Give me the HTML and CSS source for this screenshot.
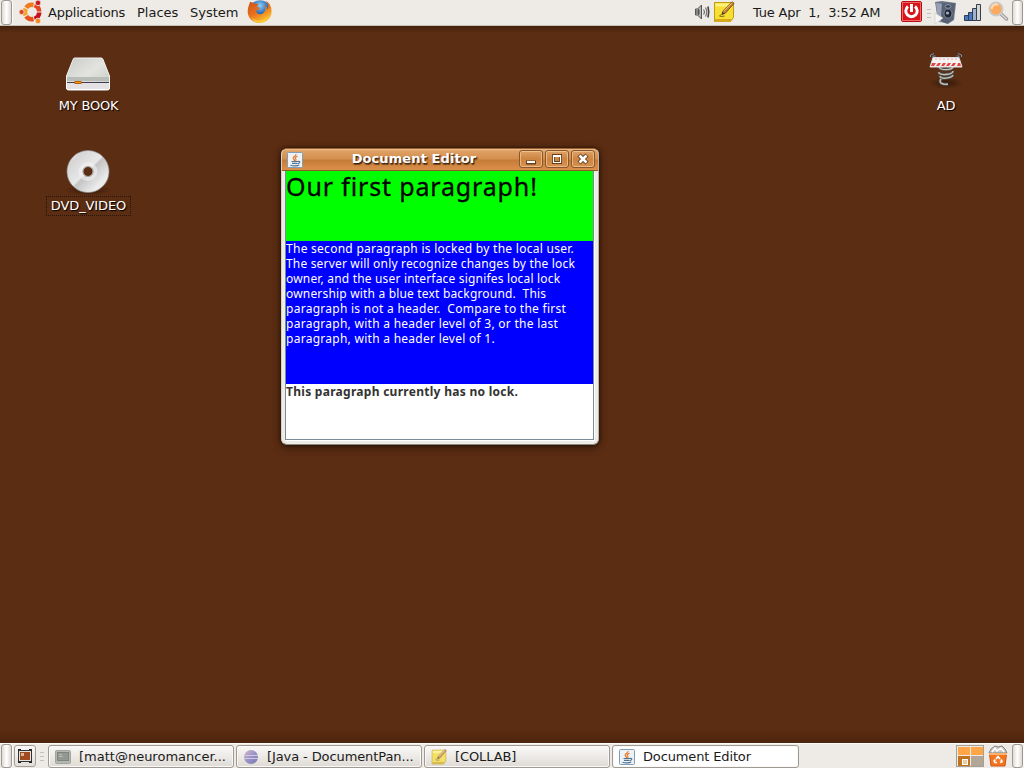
FILE: index.html
```html
<!DOCTYPE html>
<html lang="en">
<head>
<meta charset="utf-8">
<title>Desktop</title>
<link rel="stylesheet" href="styles.css">
</head>
<body>
<svg class="defs" width="0" height="0" aria-hidden="true">
  <defs>
    <linearGradient id="drive" x1="0" y1="0" x2="1" y2="1"><stop offset="0" stop-color="#c9cbc6"/><stop offset=".5" stop-color="#e3e4e0"/><stop offset="1" stop-color="#c4c6c1"/></linearGradient>
    <linearGradient id="disc" x1="0" y1="0" x2="1" y2="1"><stop offset="0" stop-color="#fff"/><stop offset=".2" stop-color="#d6d6d6"/><stop offset=".48" stop-color="#e8e8e8"/><stop offset=".52" stop-color="#c4c4c4"/><stop offset=".8" stop-color="#ededed"/><stop offset="1" stop-color="#c8c8c8"/></linearGradient>
    <radialGradient id="shade"><stop offset="0" stop-color="#000" stop-opacity=".45"/><stop offset="1" stop-color="#000" stop-opacity="0"/></radialGradient>
    <radialGradient id="globe" cx=".5" cy=".25" r=".7"><stop offset="0" stop-color="#8fd0f4"/><stop offset=".5" stop-color="#2c6fbd"/><stop offset="1" stop-color="#173a80"/></radialGradient>
    <linearGradient id="fox" x1="0" y1="0" x2=".6" y2="1"><stop offset="0" stop-color="#c9501a"/><stop offset=".55" stop-color="#e8701c"/><stop offset="1" stop-color="#fbc52e"/></linearGradient>
    <linearGradient id="eclipse" x1="0" y1="0" x2="1" y2="1"><stop offset="0" stop-color="#d9b6c9"/><stop offset=".5" stop-color="#9a94c6"/><stop offset="1" stop-color="#7775ae"/></linearGradient>
    <symbol id="java" viewBox="0 0 16 16">
      <rect x=".5" y=".5" width="15" height="15" rx="1" fill="#eef2f5" stroke="#7f9db5"/>
      <path d="M9 2C9.500 4 6 4.400 6.200 6.300c.1 1.200 1.500 1.400 1.300 2.700M10.600 4.300C8 5.400 7.500 6 8.700 7.200c.6.700.3 1.300-.3 1.800" fill="none" stroke="#e5772b" stroke-width="1.200"/>
      <path d="M4.500 9.500h6.300M5 11.300h5.200M10.800 9.500c3-.6 2.500 1.900-.3 2.200M3.500 13.300c2 .9 7 .8 8.700-.2" fill="none" stroke="#4f7594" stroke-width="1.200"/>
    </symbol>
    <symbol id="note" viewBox="0 0 22 22">
      <path d="M1.500 1.500h19v15l-3 4h-16z" fill="#f7de32" stroke="#bd9c14"/>
      <path d="M2.500 2.500h17v3h-17z" fill="#fff17e"/>
      <path d="M2 18h17l-2 3H2z" fill="#d6a91b"/>
      <path d="M8.500 13.500c-3 1.500-3 2.500 3 1.600" fill="none" stroke="#77651c"/>
      <path d="M9 13.500l1-3.500L19 .8l2 1.700-8.800 9.800z" fill="#c7822f" stroke="#76501e"/>
      <path d="M10.500 10.300l8.700-8.700" stroke="#f5cf82"/>
      <path d="M9 13.500l.7-2.500 1.600 1.500z" fill="#333"/>
    </symbol>
  </defs>
</svg>

<div class="desktop">
  <header class="panel panel-top">
    <span class="handle"></span>
    <svg class="ubuntu" width="24" height="24" viewBox="0 0 24 24">
      <g fill="none" stroke-width="4.600">
        <path d="M7.200 7.800A7 7 0 0 1 14.500 5" stroke="#f07a1c"/>
        <path d="M15.500 5.200A7 7 0 0 1 20.200 11.500" stroke="#e8451f"/>
        <path d="M20.200 12.500A7 7 0 0 1 15.500 18.800" stroke="#c8101c"/>
        <path d="M14.500 19A7 7 0 0 1 7.200 16.200" stroke="#e8501c"/>
        <path d="M6.700 15.200A7 7 0 0 1 6.700 8.800" stroke="#f7a01f"/>
      </g>
      <g stroke="#eeeae5" stroke-width=".8"><circle cx="2.600" cy="12" r="2.600" fill="#e3421d"/><circle cx="19" cy="2.900" r="2.800" fill="#c91a20"/><circle cx="19" cy="21" r="2.800" fill="#f58a20"/></g>
    </svg>
    <nav class="menus"><span class="m-app">Applications</span><span class="m-pla">Places</span><span class="m-sys">System</span></nav>
    <svg class="firefox" width="25" height="24" viewBox="0 0 25 24">
      <circle cx="13" cy="11" r="10.800" fill="url(#globe)"/>
      <path d="M3 2c2-.4 3 .5 4 1.700 2-.5 3 0 4.300.8L9.600 6.800l3 1-.5 1.800-3 .9c.3 4 4.600 5 7.500 2.200 2-2 2.500-5 .8-7.700 2 .9 3 2.700 3.200 4.500C22 7 20.800 3 18.300.8 23 2.500 25 8 24.500 12.500 24 19 18 23 12.500 23 6 23 .7 18 .7 11.500.7 7.500 2 5 3 2z" fill="url(#fox)"/>
      <path d="M3 15c3 6 12 8 18 1-2 6-10 8-14 5" fill="#ffd447" opacity=".7"/>
    </svg>
    <span class="spacer"></span>
    <svg class="sound" width="17" height="18" viewBox="0 0 17 18">
      <path d="M1.500 6h2l4-4v14l-4-4h-2z" fill="#b5b5b3" stroke="#555"/><path d="M2 8h4M2 10h4M4.500 6v6" stroke="#555"/>
      <path d="M9.500 6.500q2 2.500 0 5M11.500 4.500q2.500 4.500 0 9" fill="none" stroke="#777" stroke-width="1.200"/><path d="M14 3.500q1.500 5.500 0 11" fill="none" stroke="#444" stroke-width="1.600"/>
    </svg>
    <svg class="tomboy" width="22" height="22"><use href="#note"/></svg>
    <time class="clock">Tue Apr&nbsp; 1,&nbsp; 3:52 AM</time>
    <svg class="power" width="21" height="21" viewBox="0 0 21 21">
      <rect x=".5" y=".5" width="20" height="20" rx="1.500" fill="#d8141b" stroke="#b80d12"/><rect x="1.500" y="1.500" width="18" height="18" fill="none" stroke="#f06669"/>
      <path d="M7 5.500a5.700 5.700 0 1 0 7 0" fill="none" stroke="#fff" stroke-width="3"/><path d="M10.500 3v8" stroke="#fff" stroke-width="3"/>
    </svg>
    <span class="grip"></span>
    <svg class="speaker" width="23" height="24" viewBox="0 0 23 24">
      <path d="M1 1l7-1 14 2-2 17-6 4-10-3z" fill="#6b768a"/><path d="M2 2l6 1-1 19-3-2z" fill="#97a2b5"/><path d="M8 2l13 .5-2 16-6 4-6-2z" fill="#596275"/>
      <ellipse cx="14" cy="5.500" rx="2.800" ry="1.800" fill="#353e4e" stroke="#8d98ab"/><ellipse cx="14" cy="12.500" rx="4" ry="4.600" fill="#202734" stroke="#7b879a"/><circle cx="13.500" cy="12" r="1.600" fill="#a3adbd"/>
      <path d="M1 12v11l8-6z" fill="#f5f5f3" stroke="#c9c9c6" stroke-width=".6"/>
    </svg>
    <svg class="signal" width="18" height="17" viewBox="0 0 18 17">
      <g stroke="#333d4b"><path d="M.5 11.500h4v5h-4zM4.500 8.500h4v8h-4z" fill="#4a78c4"/><path d="M8.500 4.500h4v12h-4z" fill="#9fb2d2"/><path d="M12.500.5h4v16h-4z" fill="#d4d6d5"/></g>
    </svg>
    <svg class="search" width="21" height="21" viewBox="0 0 21 21">
      <path d="M13 13l5.500 5" stroke="#999" stroke-width="3.500" stroke-linecap="round"/><path d="M13 13l5.500 5" stroke="#ddd" stroke-width="1.300" stroke-linecap="round"/>
      <circle cx="8" cy="8" r="6.500" fill="#fba95d" stroke="#c9c9c7" stroke-width="2"/><path d="M4 8a4 4 0 0 1 6-4" stroke="#ffd9ae" stroke-width="2" fill="none"/>
    </svg>
    <span class="handle handle-end"></span>
  </header>

  <main class="workspace">
    <section class="column-left">
      <figure class="icon">
        <svg width="46" height="36" viewBox="0 0 46 36">
          <path d="M8.500 1.500Q9 1 10 1h26q1.300 0 1.800 1L44.500 19v12q0 2-2 2h-39q-2 0-2-2V19z" fill="url(#drive)" stroke="#f3f3f1"/>
          <path d="M2 20h42v4H2z" fill="#b9bdb7"/><path d="M1.500 25.500h43v5q0 2-2 2h-39q-2 0-2-2z" fill="#e3e1e4" stroke="#fff"/><path d="M2 25.500h42" stroke="#433c4f"/>
          <rect x="10" y="24.500" width="6" height="2" fill="#ff9c18" stroke="#b75c0a"/>
        </svg>
        <figcaption class="label l-book">MY BOOK</figcaption>
      </figure>
      <figure class="icon icon-disc">
        <svg width="48" height="47" viewBox="0 0 48 47">
          <ellipse cx="24" cy="41" rx="23" ry="6" fill="url(#shade)"/>
          <path fill-rule="evenodd" d="M24 1.500a21 21 0 1 0 .01 0zM24 17.500a5 5 0 1 1-.01 0z" fill="url(#disc)" stroke="#8b8984" stroke-width=".7"/>
          <circle cx="24" cy="22.500" r="7.500" fill="none" stroke="#f5f5f5" stroke-width="4" opacity=".5"/>
          <circle cx="24" cy="22.500" r="5" fill="none" stroke="#aaa8a4"/>
        </svg>
        <figcaption class="label l-dvd">DVD_VIDEO</figcaption>
      </figure>
    </section>

    <article class="window">
      <div class="titlebar">
        <svg class="win-icon" width="16" height="16"><use href="#java"/></svg>
        <h1 class="title"><span>Document Editor</span></h1>
        <div class="controls">
          <button class="control" aria-label="Minimize"><svg width="22" height="17"><path d="M6 12.500h10" stroke="#633f1c" stroke-width="4"/><path d="M7 12h8" stroke="#fff" stroke-width="2"/></svg></button>
          <button class="control" aria-label="Maximize"><svg width="22" height="17"><path d="M7.500 5.500h7v7h-7z" fill="none" stroke="#633f1c" stroke-width="3"/><path d="M7.500 5.500h7v7h-7zM7 6.500h8" fill="none" stroke="#fff" stroke-width="1.200"/></svg></button>
          <button class="control" aria-label="Close"><svg width="22" height="17"><path d="M7 5l8 8M15 5l-8 8" stroke="#633f1c" stroke-width="4.500"/><path d="M7.500 5.500l7 7M14.500 5.500l-7 7" stroke="#fff" stroke-width="2.500"/></svg></button>
        </div>
      </div>
      <div class="document">
        <div class="para para-header"><span>Our first paragraph!</span></div>
        <div class="para para-locked"><span class="t1">The second paragraph is locked by the local user.</span><span class="t2">The server will only recognize changes by the lock</span><span class="t2">owner, and the user interface signifes local lock</span><span class="t2">ownership with a blue text background.&nbsp; This</span><span class="t1">paragraph is not a header.&nbsp; Compare to the first</span><span class="t1">paragraph, with a header level of 3, or the last</span><span class="t1">paragraph, with a header level of 1.</span></div>
        <div class="para para-free"><span>This paragraph currently has no lock.</span></div>
      </div>
    </article>

    <section class="column-right">
      <figure class="icon icon-ad">
        <svg width="36" height="38" viewBox="0 0 36 38">
          <ellipse cx="18" cy="31" rx="17" ry="6" fill="url(#shade)"/>
          <g fill="none" stroke="#51534f" stroke-width="3"><path d="M11 15c2 4 13 3 14 0M11 20c-1 4 14 3 14-1M12 24c0 4 12 2 13-1M13 27c-3 4 2 6 7 5"/></g>
          <g fill="none" stroke="#bfc2bd" stroke-width="1.300"><path d="M11 15c2 4 13 3 14 0M11 20c-1 4 14 3 14-1M12 24c0 4 12 2 13-1M13 27c-3 4 2 6 7 5"/></g>
          <path d="M5 5.500h26l3 9.500H2z" fill="#f5f3f1" stroke="#ddd"/><path d="M4 11h4l-2 3H3zM10 11h3l-2 3H8zM15 11h3l-2 3h-3zM20 11h3l-2 3h-3zM25 11h3l-2 3h-3zM30 11h2l1 3h-4z" fill="#e34345"/><path d="M7 7h22" stroke="#f0a5a5" stroke-dasharray="2 2"/>
          <path d="M2.500 5V3L6 1.500M5 5.500V4h2.500M33.500 5V3L30 1.500M31 5.500V4h-2.500" fill="none" stroke="#7590b2"/>
        </svg>
        <figcaption class="label l-ad">AD</figcaption>
      </figure>
    </section>
  </main>

  <footer class="panel panel-bottom">
    <span class="handle"></span>
    <span class="show-desktop"><svg width="14" height="14" viewBox="0 0 14 14"><rect x="1.500" y="2.500" width="11" height="9" fill="#a14b20" stroke="#e6e2dd"/><rect x=".5" y="1.500" width="13" height="11" fill="none" stroke="#333"/><path d="M3 4h3v3H3z" fill="#d8b8a6"/><path d="M0 3V.5h3M11 .5h3V3M0 11v2.500h3M11 13.500h3V11" fill="none" stroke="#222"/></svg></span>
    <span class="grip grip-low"></span>
    <div class="tasks">
      <span class="task"><svg width="16" height="16" viewBox="0 0 16 16"><rect x=".5" y="1.500" width="15" height="13" rx="1" fill="#b5b7b1" stroke="#a2a49e"/><rect x="2.500" y="3.500" width="11" height="8" fill="#939990" stroke="#7f857d"/><path d="M4 5.500h3M4 7.500h4" stroke="#b8beb5"/></svg><span class="k1">[matt@neuromancer...</span></span>
      <span class="task"><svg width="16" height="16" viewBox="0 0 16 16"><circle cx="8" cy="8" r="7" fill="url(#eclipse)"/><path d="M1 6.500h14M1 9.500h14" stroke="#cfcae4"/></svg><span class="k2">[Java - DocumentPan...</span></span>
      <span class="task"><svg class="faded" width="16" height="16"><use href="#note"/></svg><span class="k2">[COLLAB]</span></span>
      <span class="task task-active"><svg width="16" height="16"><use href="#java"/></svg><span class="k4">Document Editor</span></span>
    </div>
    <span class="spacer"></span>
    <span class="pager"><i></i><i></i><i class="current"></i><i class="empty"></i></span>
    <svg class="trash" width="20" height="22" viewBox="0 0 20 22">
      <path d="M1 8l2-4 4-3 3 1 4-1 3 3 2 4z" fill="#c9cac8" stroke="#828480"/><path d="M4 7l3-4 2 3 4-3 3 4" fill="none" stroke="#fff" stroke-width="1.500"/>
      <path d="M1.500 9h17L17 21H3z" fill="#f27621" stroke="#cf5613"/><path d="M1 9h18" stroke="#ffb26d" stroke-width="2"/>
      <path d="M8 14l2-2.500 2 2.500M13 14.500l1 2-2 1M9 17.500H7l-.8-1.500 1-1.500" fill="none" stroke="#fff" stroke-width="1.700"/>
    </svg>
    <span class="handle handle-end"></span>
  </footer>
</div>
</body>
</html>
```
FILE: styles.css
```css
* { box-sizing: border-box; }
body { margin: 0; font: 13px/16px "DejaVu Sans", sans-serif; color: #1a1a1a; white-space: nowrap; }
svg { display: block; flex: none; }
.defs { position: absolute; }
.desktop { width: 1024px; height: 768px; display: flex; flex-direction: column; background: #5b2d12; overflow: hidden; }
.spacer { flex: 1; }

.panel { display: flex; align-items: flex-start; background: #eeeae5; flex: none; }
.panel-top { height: 26px; border-bottom: 1px solid #c6bfb7; }
.panel-bottom { height: 25px; border-top: 1px solid #fbfaf9; }
.handle { width: 11px; height: 25px; margin-left: 1px; border: 1px solid #9e9a93; border-radius: 3px; background: linear-gradient(90deg, #dedbd6, #fff 50%, #dcd9d4); flex: none; box-shadow: 1px 0 #fbfaf9; }
.handle-end { margin-right: 1px; }
.panel-bottom .handle { height: 24px; }
.ubuntu { margin: 0 0 0 7px; }
.menus { display: flex; margin: 5px 0 0 5px; }
.menus span { display: block; }
.m-app { width: 89px; letter-spacing: -.2px; }
.m-pla { width: 53px; }
.m-sys { width: 52px; }
.firefox { margin: 0 0 0 5px; }
.sound { margin: 3px 2px 0 0; }
.tomboy { margin: 1px 18px 0 0; }
.clock { width: 149px; margin-top: 5px; letter-spacing: -.2px; }
.power { margin: 1px 1px 0 -1px; }
.grip { width: 4px; height: 9px; margin: 9px 0 0 4px; background: repeating-linear-gradient(#c5c0b9 0 1px, #eeeae5 1px 4px); flex: none; }
.speaker { margin: 1px 0 0 3px; }
.signal { margin: 4px 0 0 7px; }
.search { margin: 1px 2px 0 6px; }

.workspace { flex: 1; min-height: 0; display: flex; align-items: flex-start; background: linear-gradient(#46210c, #5b2d12 7px, #5b2d12 704px, #4c230d); }
.column-left { width: 281px; padding-left: 38px; flex: none; }
.column-right { width: 425px; padding-left: 297px; }
.icon { margin: 0; width: 100px; display: flex; flex-direction: column; align-items: center; padding-top: 31px; }
.icon-disc { padding-top: 34px; }
.icon-ad { padding-top: 26px; }
.label { color: #fff; padding: 1px 4px; height: 18px; line-height: 16px; text-shadow: 1px 1px 1px #000; margin-top: 4px; letter-spacing: -.2px; }
.l-book { margin-left: 1px; }
.icon-ad .label { margin-top: 7px; }
.l-dvd { outline: 1px dotted #25150c; margin: 1px 0 0 1px; letter-spacing: -.1px; }

.window { width: 318px; height: 297px; margin-top: 122px; border-radius: 6px; border: 1px solid #6a4a2d; border-color: #9c6332 #b9b5ae #8c8880 #d5d2cc; background: #eeece7; display: flex; flex-direction: column; flex: none; overflow: hidden; box-shadow: 0 0 3px rgba(25,10,0,.85), 0 2px 8px rgba(20,8,0,.65); }
.titlebar { height: 22px; display: flex; align-items: flex-start; margin: 0; border-bottom: 1px solid #8e5a2c; background: linear-gradient(#efbd8b 0, #dfa064 2px, #d38f4e 10px, #c47c36 11px, #d98e49 20px); flex: none; }
.win-icon { margin: 3px 0 0 5px; }
.title { width: 210px; margin: 1px 0 0 6px; font: bold 13px/17px "DejaVu Sans", sans-serif; letter-spacing: .1px; color: #fff; text-align: center; text-shadow: 1px 1px 1px #3c2511, 1px 2px 1px #704520; }
.controls { display: flex; gap: 2px; padding-top: 1px; }
.control { width: 24px; height: 18px; padding: 0; border: 1px solid #87562b; border-radius: 3px; background: linear-gradient(#dfa369, #cc843f 50%, #d79151); box-shadow: inset 0 0 0 1px rgba(255,218,174,.55); }
.control svg { margin: -1px 0 0; }
.document { width: 309px; height: 269px; margin-left: 3px; border: 1px solid #7a8a99; border-top: 0; flex: none; background: #fff; box-shadow: 1px 1px #fff; }
.para { font-family: "Noto Sans", "DejaVu Sans", sans-serif; }
.para span { display: block; width: max-content; }
.para-header { height: 70px; background: #0f0; color: #000; font-size: 25px; line-height: 30px; letter-spacing: .85px; -webkit-text-stroke: .3px #000; }
.para-locked { height: 143px; background: #00f; color: #fff; font-size: 12px; line-height: 15px; }
.t1 { letter-spacing: .27px; }
.t2 { letter-spacing: .18px; }
.para-free { height: 55px; color: #333; font-weight: bold; font-size: 12px; line-height: 16px; letter-spacing: .28px; }

.show-desktop { width: 22px; height: 22px; margin: 1px 0 0 2px; border: 1px solid #a39f98; border-radius: 3px; padding: 3px; background: linear-gradient(#faf9f7, #e2ded9); }
.grip-low { margin: 8px 4px 0; }
.tasks { display: flex; gap: 2px; margin-top: 1px; }
.task { width: 186px; height: 23px; border: 1px solid #9e9a93; border-radius: 3px; box-shadow: inset 0 0 0 1px #faf9f8; background: linear-gradient(#faf9f8, #eae7e3 60%, #dedbd6); display: flex; padding: 3px 6px; gap: 8px; }
.task-active { background: #fff; width: 187px; }
.k2 { letter-spacing: -.1px; }
.k4 { letter-spacing: -.14px; }
.faded { opacity: .7; }
.pager { width: 28px; height: 22px; margin: 1px 4px 0 0; border: 1px solid #a69e94; background: #eeeae5; padding: 1px; display: grid; grid-template-columns: 12px 12px; grid-template-rows: 8px 10px; gap: 1px; }
.pager i { background: #ffa648; }
.pager .current { background: #c0721e; padding: 3px 4px; }
.pager .current::before { content: ""; display: block; width: 4px; height: 4px; border: 1px solid #fff; background: #eecb9a; }
.pager .empty { background: #b2a696; }
.trash { margin: 1px 3px 0 0; }
```
